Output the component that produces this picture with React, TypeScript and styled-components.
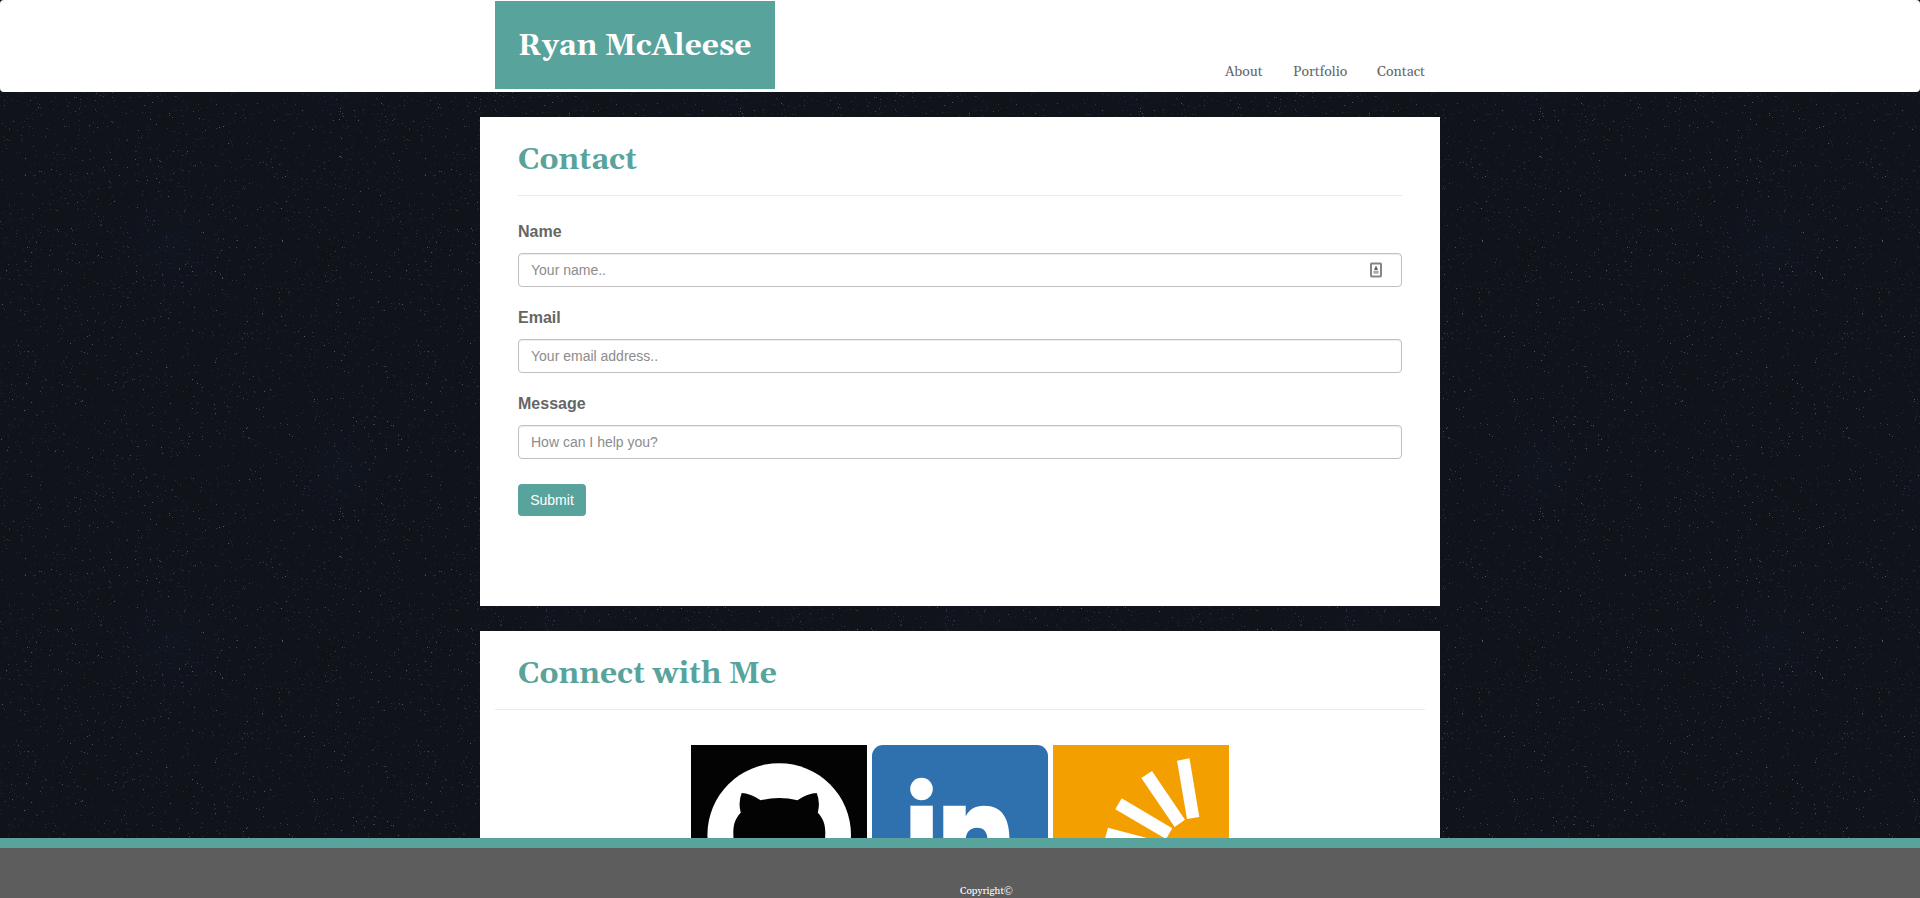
import React from "react";
import styled, { createGlobalStyle } from "styled-components";

const teal = "#58a39b";
const serif = `Georgia, Gelasio, "Liberation Serif", serif`;
const sans = `"Liberation Sans", Arial, sans-serif`;

const GlobalStyle = createGlobalStyle`
  * { box-sizing: border-box; }
  html, body { margin: 0; height: 100%; overflow: hidden; background: #10131a; }
  body { font-family: ${sans}; font-size: 14px; line-height: 20px; color: #666; }
`;

const Page = styled.div`
  position: relative;
  isolation: isolate;
  height: 898px;
  overflow: hidden;
`;

const Sky = styled.svg`
  position: absolute;
  inset: 0;
  z-index: -1;
`;

const Header = styled.header`
  height: 92px;
  margin-bottom: 25px;
  padding-top: 1px;
  background: #fff;
  border-radius: 4px;
`;

const HeaderInner = styled.div`
  width: 930px;
  margin: 0 auto;
  display: flex;
  justify-content: space-between;
`;

const Brand = styled.a`
  width: 280px;
  height: 88px;
  padding-left: 23px;
  background: ${teal};
  color: #fff;
  font: bold 30px/90px ${serif};
  white-space: nowrap;
`;

const Nav = styled.nav`
  display: flex;
  gap: 30px;
  padding-top: 61px;
`;

const NavLink = styled.a<{ $width: number }>`
  width: ${(p) => p.$width}px;
  font: 14px/20px ${serif};
  white-space: nowrap;
`;

const Card = styled.section<{ $height: number }>`
  width: 960px;
  height: ${(p) => p.$height}px;
  margin: 0 auto 25px;
  padding: 23px 15px 0;
  background: #fff;
`;

const Title = styled.h1`
  margin: 0;
  padding-left: 23px;
  color: ${teal};
  font: bold 30px/40px ${serif};
`;

const Rule = styled.hr<{ $inset: number }>`
  height: 1px;
  margin: 15px ${(p) => p.$inset}px 0;
  border: 0;
  background: #eaeaea;
`;

const Form = styled.form`
  padding: 25px 23px 0;
`;

const Field = styled.div`
  position: relative;
  height: 86px;
`;

const Label = styled.label`
  display: block;
  padding-bottom: 10px;
  font-size: 16px;
  line-height: 22px;
  font-weight: bold;
`;

const Input = styled.input`
  display: block;
  width: 100%;
  height: 34px;
  padding: 6px 12px;
  border: 1px solid #c0c0c0;
  border-radius: 4px;
  box-shadow: inset 0 1px 1px rgba(0, 0, 0, 0.075);
  font: 14px/20px ${sans};
  &::placeholder { color: #8c8c8c; opacity: 1; }
`;

const AutofillIcon = styled.svg`
  position: absolute;
  top: 41px;
  right: 20px;
`;

const Submit = styled.button`
  display: block;
  width: 68px;
  height: 32px;
  margin-top: 5px;
  padding: 0;
  border: 0;
  border-radius: 4px;
  background: ${teal};
  color: #fff;
  font: 14px/32px ${sans};
`;

const Tiles = styled.div`
  display: flex;
  justify-content: center;
  gap: 5px;
  padding-top: 35px;
`;

const Footer = styled.footer`
  position: absolute;
  left: 0;
  right: 0;
  bottom: 0;
  height: 60px;
  padding: 36px 0 0 960px;
  border-top: 10px solid ${teal};
  background: #5d5d5d;
  color: #fff;
  font: 10px/14px ${serif};
`;

const CopyrightSign = styled.span`
  font: 12px/12px "Liberation Serif", serif;
  vertical-align: -1px;
`;

const TILE = 400;
const starColors = ["#2c313d", "#404656", "#26304c", "#363634", "#5a606e", "#1d2638", "#06070a"];

function makeStars(count: number) {
  let seed = 7919;
  const next = () => {
    seed = (seed * 16807) % 2147483647;
    return seed / 2147483647;
  };
  return Array.from({ length: count }, () => ({
    x: Math.floor(next() * TILE),
    y: Math.floor(next() * TILE),
    color: starColors[Math.floor(next() * starColors.length)],
    opacity: 0.15 + next() * 0.8,
  }));
}

const stars = makeStars(5000);

const StarField = () => (
  <Sky width="1920" height="898" aria-hidden="true">
    <defs>
      <radialGradient id="haze">
        <stop offset="0" stopColor="#15203f" stopOpacity="0.14" />
        <stop offset="1" stopColor="#15203f" stopOpacity="0" />
      </radialGradient>
      <pattern id="stars" width={TILE} height={TILE} patternUnits="userSpaceOnUse">
        <rect width={TILE} height={TILE} fill="#10131a" />
        <circle cx="170" cy="245" r="60" fill="url(#haze)" />
        <circle cx="340" cy="70" r="50" fill="url(#haze)" />
        {stars.map((s, i) => (
          <rect key={i} x={s.x} y={s.y} width="1" height="1" fill={s.color} opacity={s.opacity} />
        ))}
      </pattern>
    </defs>
    <rect width="1920" height="898" fill="url(#stars)" />
  </Sky>
);

const GithubTile = () => (
  <svg width="176" height="176" viewBox="0 0 176 176">
    <rect width="176" height="176" fill="#030303" />
    <circle cx="88.2" cy="90" r="71.8" fill="#fff" />
    <path
      fill="#030303"
      d="M50.7 48C56 48 63 51 69.7 55.3Q88.2 50.8 106.5 55.3C113 51 120 48 125.7 48Q129.5 57 126.8 67.7C132 73 134.3 79 134.3 88C134.3 115 119 122 102 124V160H74V124C57 122 42.3 115 42.3 88C42.3 79 44.5 73 49.7 67.7Q47 57 50.7 48Z"
    />
  </svg>
);

const LinkedinTile = () => (
  <svg width="176" height="176" viewBox="0 0 176 176">
    <rect width="176" height="176" rx="11" fill="#2f71af" />
    <g fill="#fff">
      <circle cx="49.5" cy="44" r="11.3" />
      <rect x="38.4" y="60.7" width="22.4" height="85" />
      <path d="M71.3 60.7H93.7V71.5C97 64.5 103 60.7 112 60.7C130 60.7 137.5 73 137.5 95V145.7H115.7V96C115.7 87 112 82.7 105 82.7C97.5 82.7 93.7 88 93.7 95V145.7H71.3Z" />
    </g>
  </svg>
);

const SunburstTile = () => (
  <svg width="176" height="176" viewBox="0 0 176 176">
    <rect width="176" height="176" fill="#f39f00" />
    <g fill="#fff">
      <path d="M124 15.7L136.5 13.2L146.3 72L134 74Z" />
      <path d="M88.3 33L99 26L132 74.7L121.7 82Z" />
      <path d="M68.7 53.3L62.3 64.3L113 93.9L119.3 83.3Z" />
      <path d="M55 82.7L51 97L108 112L112 97.7Z" />
    </g>
  </svg>
);

const ContactCardIcon = () => (
  <AutofillIcon width="12" height="16" viewBox="0 0 12 16">
    <rect x="1" y="1.5" width="10" height="13" rx="0.8" fill="#fff" stroke="#858585" strokeWidth="2" />
    <path d="M6 3.5L7 5.5L8 7.9H4L5 5.5Z" fill="#666" />
    <rect x="3.5" y="8.7" width="5" height="3" fill="#a8a8a8" />
  </AutofillIcon>
);

const fields = [
  { label: "Name", hint: "Your name..", icon: true },
  { label: "Email", hint: "Your email address.." },
  { label: "Message", hint: "How can I help you?" },
];

export default function App() {
  return (
    <Page>
      <GlobalStyle />
      <StarField />
      <Header>
        <HeaderInner>
          <Brand>Ryan McAleese</Brand>
          <Nav>
            <NavLink $width={38}>About</NavLink>
            <NavLink $width={54}>Portfolio</NavLink>
            <NavLink $width={48}>Contact</NavLink>
          </Nav>
        </HeaderInner>
      </Header>
      <Card $height={489}>
        <Title>Contact</Title>
        <Rule $inset={23} />
        <Form>
          {fields.map((f) => (
            <Field key={f.label}>
              <Label>{f.label}</Label>
              <Input placeholder={f.hint} />
              {f.icon && <ContactCardIcon />}
            </Field>
          ))}
          <Submit type="button">Submit</Submit>
        </Form>
      </Card>
      <Card $height={400}>
        <Title>Connect with Me</Title>
        <Rule $inset={0} />
        <Tiles>
          <GithubTile />
          <LinkedinTile />
          <SunburstTile />
        </Tiles>
      </Card>
      <Footer>
        Copyright<CopyrightSign>©</CopyrightSign>
      </Footer>
    </Page>
  );
}
